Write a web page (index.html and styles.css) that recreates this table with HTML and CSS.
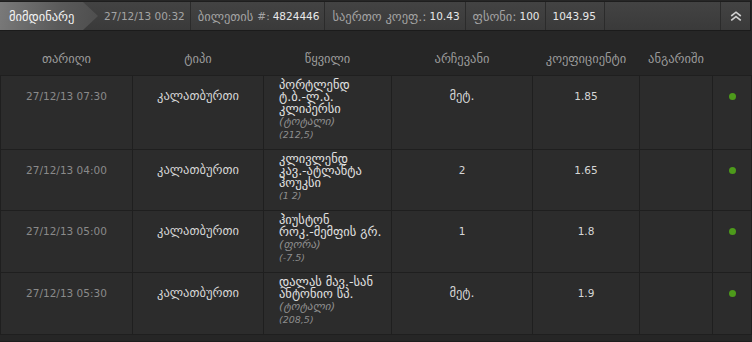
FILE: index.html
```html
<!DOCTYPE html>
<html lang="ka">
<head>
<meta charset="utf-8">
<title>ბილეთები</title>
<link rel="stylesheet" href="styles.css">
</head>
<body>
<section class="ticket">
  <header class="ticket-bar">
    <div class="bar-item tab">მიმდინარე</div>
    <div class="bar-item num">27/12/13 00:32</div>
    <div class="bar-item">ბილეთის&nbsp;<span class="num">#:</span><b>4824446</b></div>
    <div class="bar-item">საერთო კოეფ.: <b>10.43</b></div>
    <div class="bar-item">ფსონი: <b>100</b></div>
    <div class="bar-item amount"><b>1043.95</b></div>
    <div class="bar-item spacer"></div>
    <div class="bar-item collapse">
      <svg width="12" height="10" viewBox="0 0 12 10"><path d="M1.2 5 L6 1.2 L10.8 5 M1.2 9.4 L6 5.6 L10.8 9.4" fill="none" stroke="#d0d0d0" stroke-width="1.6"/></svg>
    </div>
  </header>
  <table class="bets">
    <colgroup>
      <col class="c-date"><col class="c-type"><col class="c-pair"><col class="c-pick"><col class="c-odds"><col class="c-acc"><col class="c-state">
    </colgroup>
    <thead>
      <tr><th>თარიღი</th><th>ტიპი</th><th>წყვილი</th><th>არჩევანი</th><th>კოეფიციენტი</th><th>ანგარიში</th><th></th></tr>
    </thead>
    <tbody>
      <tr>
        <td class="date">27/12/13 07:30</td>
        <td>კალათბურთი</td>
        <td class="pair">პორტლენდ<br>ტ.ბ.-ლ.ა.<br>კლიპერსი<br><span class="market">(ტოტალი)<br><span class="num">(212,5)</span></span></td>
        <td>მეტ.</td>
        <td class="odds">1.85</td>
        <td></td>
        <td class="state"><span class="dot"></span></td>
      </tr>
      <tr>
        <td class="date">27/12/13 04:00</td>
        <td>კალათბურთი</td>
        <td class="pair">კლივლენდ<br>კავ.-ატლანტა<br>ჰოუკსი<br><span class="market"><span class="num">(1 2)</span></span></td>
        <td class="odds">2</td>
        <td class="odds">1.65</td>
        <td></td>
        <td class="state"><span class="dot"></span></td>
      </tr>
      <tr>
        <td class="date">27/12/13 05:00</td>
        <td>კალათბურთი</td>
        <td class="pair">ჰიუსტონ<br>როკ.-მემფის გრ.<br><span class="market">(ფორა)<br><span class="num">(-7.5)</span></span></td>
        <td class="odds">1</td>
        <td class="odds">1.8</td>
        <td></td>
        <td class="state"><span class="dot"></span></td>
      </tr>
      <tr>
        <td class="date">27/12/13 05:30</td>
        <td>კალათბურთი</td>
        <td class="pair">დალას მავ.-სან<br>ანტონიო სპ.<br><span class="market">(ტოტალი)<br><span class="num">(208,5)</span></span></td>
        <td>მეტ.</td>
        <td class="odds">1.9</td>
        <td></td>
        <td class="state"><span class="dot"></span></td>
      </tr>
    </tbody>
  </table>
</section>
<section class="ticket">
  <header class="ticket-bar">
    <div class="bar-item tab">მიმდინარე</div>
    <div class="bar-item num">27/12/13 00:28</div>
    <div class="bar-item">ბილეთის&nbsp;<span class="num">#:</span><b>4824391</b></div>
    <div class="bar-item">საერთო კოეფ.: <b>3.42</b></div>
    <div class="bar-item">ფსონი: <b>50</b></div>
    <div class="bar-item amount"><b>171.00</b></div>
    <div class="bar-item spacer"></div>
  </header>
</section>
</body>
</html>
```
FILE: styles.css
```css
html, body {
  margin: 0;
  padding: 0;
}
body {
  width: 752px;
  height: 342px;
  overflow: hidden;
  background: #262626;
  font-family: "DejaVu Sans", "Noto Sans", sans-serif;
  font-size: 12.5px;
  color: #d6d6d6;
}
.num {
  font-size: 10.5px;
}
.ticket {
  padding-top: 1px;
  padding-bottom: 5px;
}
.ticket-bar {
  display: flex;
  align-items: stretch;
  width: 750px;
  height: 28px;
  border-top: 1px solid #1e1e1e;
  border-bottom: 1px solid #1b1b1b;
  border-right: 1px solid #1e1e1e;
  background: linear-gradient(#434343, #3a3a3a);
}
.bar-item {
  display: flex;
  align-items: center;
  padding: 0 5px 0 7px;
  border-right: 1px solid #2b2b2b;
  color: #a4a4a4;
  white-space: nowrap;
}
.bar-item b {
  font-weight: normal;
  font-size: 10.5px;
  color: #e8e8e8;
  margin-left: 3px;
}
.amount {
  padding-right: 8px;
}
.amount b {
  margin-left: 0;
}
.tab {
  width: 89px;
  padding: 0 0 0 9px;
  border-right: none;
  color: #f4f4f4;
  background: linear-gradient(100deg, #7a7a7a, #5a5a5a 60%, #4e4e4e);
  clip-path: polygon(0 0, 83px 0, 98px 50%, 83px 100%, 0 100%);
}
.tab + .bar-item {
  padding-left: 6px;
}
.spacer {
  flex: 1;
}
.collapse {
  width: 29px;
  padding: 0;
  border-right: none;
  justify-content: center;
}
.bets {
  width: 751px;
  border-collapse: collapse;
  table-layout: fixed;
}
.c-date { width: 132px; }
.c-type { width: 131px; }
.c-pair { width: 128px; }
.c-pick { width: 141px; }
.c-odds { width: 107px; }
.c-acc { width: 73px; }
.c-state { width: 39px; }
.bets th {
  font-weight: normal;
  color: #9c9c9c;
  line-height: 12px;
  padding: 22px 0 10px;
  text-align: center;
  background: #262626;
  border: none;
}
.bets td {
  background: #2c2c2c;
  border: 1px solid #1f1f1f;
  vertical-align: top;
  text-align: center;
  line-height: 12px;
  padding: 14px 0 8px;
  color: #d6d6d6;
}
.bets td.date {
  font-size: 10.5px;
  color: #8a8a8a;
}
.bets td.odds {
  font-size: 10.5px;
}
.bets td.pair {
  text-align: left;
  padding: 3px 0 8px 15px;
  color: #e2e2e2;
}
.market {
  font-style: italic;
  font-size: 11.3px;
  color: #8e8e8e;
}
.market .num {
  font-size: 9.5px;
}
.dot {
  display: inline-block;
  width: 7px;
  height: 7px;
  margin-top: 3px;
  border-radius: 50%;
  background: #4d9a1b;
}
```
